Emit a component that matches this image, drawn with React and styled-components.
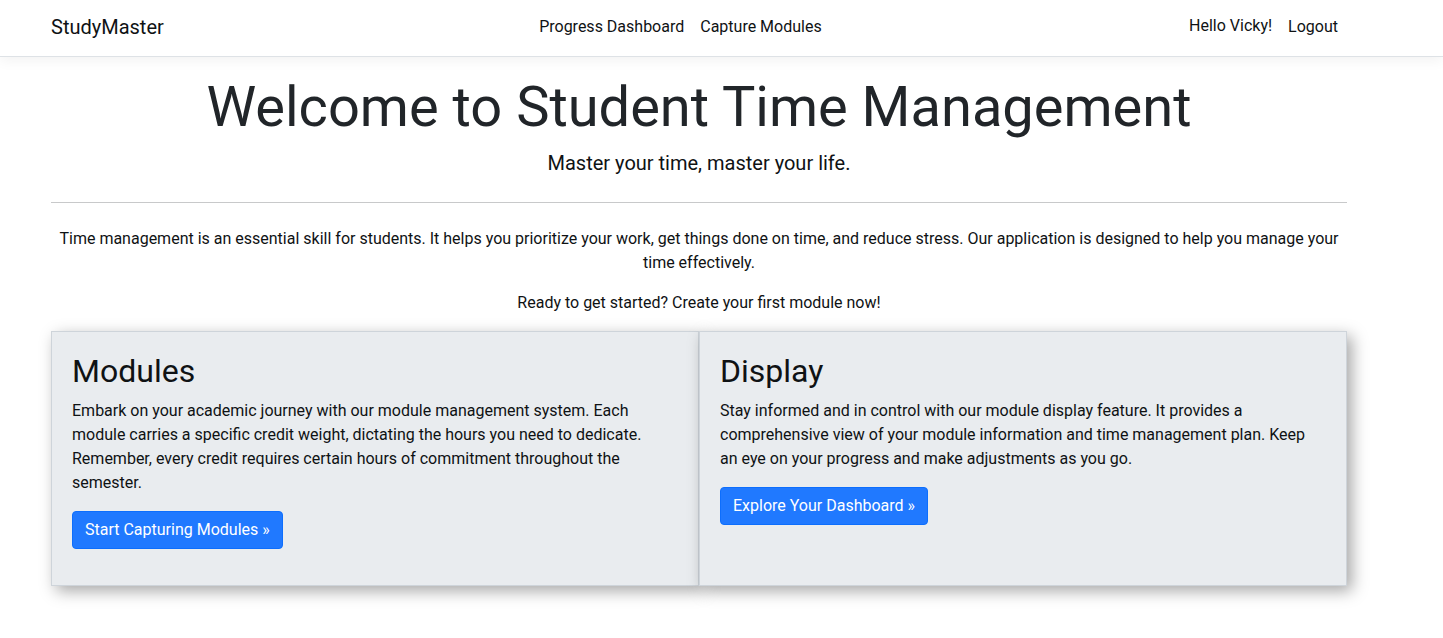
import React from "react";
import styled, { createGlobalStyle } from "styled-components";

const GlobalStyle = createGlobalStyle`
  *, *::before, *::after { box-sizing: border-box; }
  body {
    margin: 0;
    background: #fff;
    color: #0f1214;
    font-family: Roboto, "Liberation Sans", sans-serif;
    font-size: 16px;
    line-height: 24px;
  }
`;

const Header = styled.header`
  border-bottom: 1px solid #dee2e6;
  box-shadow: 0 4px 12px rgba(0, 0, 0, 0.05);
`;

const Navbar = styled.nav`
  display: flex;
  align-items: center;
  justify-content: space-between;
  padding: 7px 97px 9px 51px;
`;

const Account = styled.div`
  display: flex;
  align-items: center;
`;

const Brand = styled.a`
  margin-right: 16px;
  color: #0f1214;
  font-size: 20px;
  line-height: 30px;
  text-decoration: none;
`;

const NavList = styled.ul`
  display: flex;
  margin: 0;
  padding: 0;
  list-style: none;
`;

const NavLink = styled.a`
  display: block;
  padding: 8px;
  color: #0f1214;
  text-decoration: none;
`;

const Greeting = styled.span`
  padding: 0 8px 2px;
`;

const Main = styled.main`
  padding: 16px 96px 32px 51px;
`;

const Hero = styled.section`
  text-align: center;
`;

const Title = styled.h1`
  margin: 0 0 7px;
  color: #212529;
  font-size: 56px;
  font-weight: 400;
  line-height: 68px;
`;

const Lead = styled.p`
  margin: 0;
  font-size: 20px;
  line-height: 30px;
`;

const Rule = styled.hr`
  margin: 24px 0;
  border: 0;
  border-top: 1px solid #c8c9ca;
`;

const Text = styled.p`
  margin: 0 0 16px;
`;

const Cards = styled.div`
  display: grid;
  grid-template-columns: 1fr 1fr;
`;

const Card = styled.section`
  padding: 20px;
  border: 1px solid #ced4da;
  background: #e9ecef;
  box-shadow: 5px 5px 15px rgba(0, 0, 0, 0.35);
`;

const CardTitle = styled.h2`
  margin: 0 0 8px;
  font-size: 32px;
  font-weight: 400;
  line-height: 39px;
`;

const ActionButton = styled.button`
  padding: 6px 12px;
  border: 1px solid #0d6efd;
  border-radius: 4px;
  background: #2079ff;
  color: #fff;
  font: inherit;
  cursor: pointer;
`;

function InfoCard({ title, text, action }) {
  return (
    <Card>
      <CardTitle>{title}</CardTitle>
      <Text>{text}</Text>
      <Text>
        <ActionButton type="button">{action} »</ActionButton>
      </Text>
    </Card>
  );
}

export default function App() {
  return (
    <>
      <GlobalStyle />
      <Header>
        <Navbar>
          <Brand href="#">StudyMaster</Brand>
          <NavList>
            <li><NavLink href="#progress">Progress Dashboard</NavLink></li>
            <li><NavLink href="#modules">Capture Modules</NavLink></li>
          </NavList>
          <Account>
            <Greeting>Hello Vicky!</Greeting>
            <NavLink href="#logout">Logout</NavLink>
          </Account>
        </Navbar>
      </Header>
      <Main>
        <Hero>
          <Title>Welcome to Student Time Management</Title>
          <Lead>Master your time, master your life.</Lead>
          <Rule />
          <Text>
            Time management is an essential skill for students. It helps you prioritize your work, get
            things done on time, and reduce stress. Our application is designed to help you manage your
            time effectively.
          </Text>
          <Text>Ready to get started? Create your first module now!</Text>
        </Hero>
        <Cards>
          <InfoCard
            title="Modules"
            text="Embark on your academic journey with our module management system. Each module carries a specific credit weight, dictating the hours you need to dedicate. Remember, every credit requires certain hours of commitment throughout the semester."
            action="Start Capturing Modules"
          />
          <InfoCard
            title="Display"
            text="Stay informed and in control with our module display feature. It provides a comprehensive view of your module information and time management plan. Keep an eye on your progress and make adjustments as you go."
            action="Explore Your Dashboard"
          />
        </Cards>
      </Main>
    </>
  );
}
